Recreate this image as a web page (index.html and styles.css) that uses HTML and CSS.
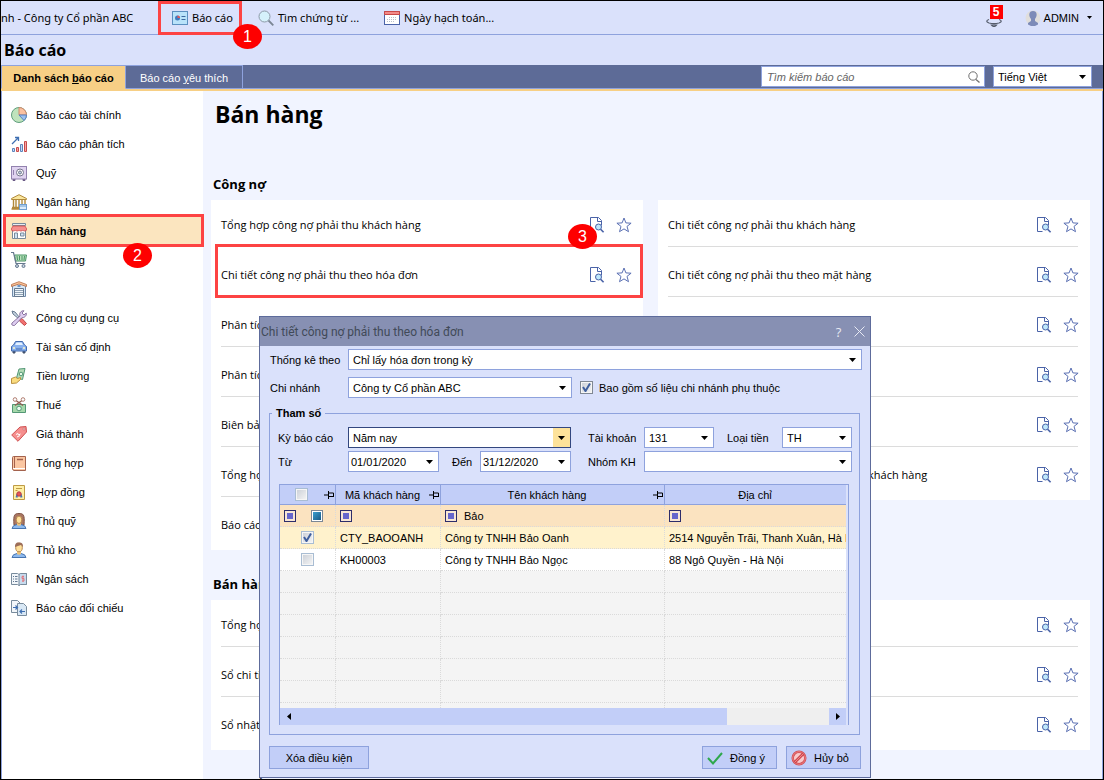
FILE: index.html
```html
<!DOCTYPE html>
<html lang="vi">
<head>
<meta charset="utf-8">
<title>Báo cáo</title>
<link rel="stylesheet" href="styles.css">
</head>
<body>
<svg class="sprite" aria-hidden="true">
  <symbol id="doc" viewBox="0 0 16 16"><path d="M6.500 14.500h-5v-14h8l3 3v5M8.500 .5v4h4" fill="none" stroke="#4a63a8"/><circle cx="9.500" cy="10" r="3" fill="#bfe8fb" stroke="#4a63a8"/><path d="M11.600 12.200l3 3" stroke="#4a63a8" stroke-width="1.600"/></symbol>
  <symbol id="star" viewBox="0 0 16 16"><path d="M8 1l1.900 4.900 5.200.3-4.100 3.200 1.500 5.300L8 11.900l-4.500 2.800L5 9.400.9 6.200l5.200-.3z" fill="#fff" stroke="#5b70b3"/></symbol>
  <symbol id="pin" viewBox="0 0 10 8"><path d="M0 4h4M4.500 0v8M5 2h4.500v4M5 5.500h4.500" fill="none" stroke="#000"/></symbol>
</svg>
<div class="page">
  <header class="topbar">
    <span class="company">nh - Công ty Cổ phần ABC</span>
    <button class="tool tool-marked" type="button">
      <svg class="icon" viewBox="0 0 16 16"><rect x=".5" y="1.500" width="15" height="13" fill="#b9e3fa" stroke="#5b8fc0"/><circle cx="5.500" cy="8" r="2.500" fill="#3f7ac0"/><path d="M5.500 8V5.500A2.500 2.500 0 0 1 8 8z" fill="#e0585a"/><path d="M9.500 6.500h4M9.500 9.500h4" stroke="#3c6aa0"/></svg>
      Báo cáo<span class="step step-one">1</span>
    </button>
    <button class="tool tool-search" type="button">
      <svg class="icon" viewBox="0 0 16 16"><circle cx="6.500" cy="6.500" r="5.500" fill="#d5f1fb" stroke="#8d9aa8"/><path d="M10.500 10.500l4.800 4.800" stroke="#7b8694" stroke-width="1.800"/></svg>
      Tìm chứng từ ...
    </button>
    <button class="tool tool-date" type="button">
      <svg class="icon" viewBox="0 0 16 16"><rect x=".5" y="1.500" width="15" height="13" fill="#fff" stroke="#4a63a8"/><path d="M.5 1.500h15v3H.5z" fill="#f28a88" stroke="#c94848"/><path d="M5 7.500h8M3 9.500h10M3 11.500h8" stroke="#b9bfca" stroke-dasharray="1 1"/></svg>
      Ngày hạch toán...
    </button>
    <button class="bell" type="button" aria-label="Thông báo">
      <svg class="icon" viewBox="0 0 16 16"><path d="M3 8.500c-3 1-3 2.500 0 3.500 3 .8 7 .8 10 0 3-1 3-2.500 0-3.500M5.500 14q2.500 3 5 0z" fill="none" stroke="#555c6b" stroke-width="1.200"/></svg>
      <span class="count">5</span>
    </button>
    <button class="user" type="button">
      <svg class="icon" viewBox="0 0 16 16"><circle cx="8" cy="8" r="7.500" fill="#e0dedc"/><path d="M8 1c4.500 0 4.500 5 2 8v2l3 2v1.500l-3 1.500H6l-3-1.500V13l3-2V9C3.500 6 3.500 1 8 1z" fill="#7d8bb8"/></svg>
      ADMIN
      <svg class="caret" viewBox="0 0 5 3"><path d="M0 0h5L2.500 3z"/></svg>
    </button>
  </header>
  <h1 class="screen-title">Báo cáo</h1>
  <nav class="tabs">
    <button class="tab tab-active" type="button">Danh sách <u>b</u>áo cáo</button>
    <button class="tab" type="button">Báo cáo <u>y</u>êu thích</button>
    <label class="search">
      <input type="search" placeholder="Tìm kiếm báo cáo" aria-label="Tìm kiếm báo cáo">
      <svg viewBox="0 0 12 12"><circle cx="5" cy="5" r="4.200" fill="none" stroke="#707070"/><path d="M8 8.500l3.500 3" stroke="#707070" stroke-width="1.300"/></svg>
    </label>
    <select class="language" aria-label="Ngôn ngữ"><option>Tiếng Việt</option></select>
  </nav>
  <div class="body">
    <nav class="sidebar">
      <a href="#"><svg class="icon" viewBox="0 0 16 16"><circle cx="8" cy="8" r="7.500" fill="#bfe3bd" stroke="#5f9e7c"/><path d="M8 8V.5A7.500 7.500 0 0 1 15.500 8z" fill="#fbc1a0" stroke="#cd8b6c"/><path d="M8 8h7.500a7 7 0 0 1-2.500 5.500z" fill="#9cc0ee" stroke="#5680c2"/></svg>Báo cáo tài chính</a>
      <a href="#"><svg class="icon" viewBox="0 0 16 16"><path d="M1 8l6-6M4 1.500h3.500V5" fill="none" stroke="#3f6fb2" stroke-width="1.300"/><path d="M1.500 12.500h2v3h-2zM9.500 8.500h2v7h-2z" fill="#c3daf5" stroke="#5d84bb"/><path d="M5.500 11.500h2v4h-2zM13.500 5.500h2v10h-2z" fill="#f5a4a3" stroke="#c64a4b"/></svg>Báo cáo phân tích</a>
      <a href="#"><svg class="icon" viewBox="0 0 16 16"><path d="M2 14v1.500h2V14M12 14v1.500h2V14" stroke="#6b5b86" fill="#6b5b86"/><rect x=".5" y="1.500" width="15" height="12.500" fill="#e0d3f0" stroke="#9282ae"/><path d="M2.500 5v5" stroke="#9282ae"/><circle cx="9" cy="7.500" r="3.500" fill="#fff" stroke="#74758c"/><circle cx="9" cy="7.500" r="1.500" fill="#b5ced9" stroke="#74758c"/></svg>Quỹ</a>
      <a href="#"><svg class="icon" viewBox="0 0 16 16"><path d="M.5 5.500v-1L8 .7l7.500 3.800v1z" fill="#fae69c" stroke="#b18a3b"/><path d="M2.500 6v7.500M5 6v7.500M8 6v7.500M11 6v4M14 6v4M.5 15h8M1 13.500h8" stroke="#b18a3b" stroke-width="1.400"/><rect x="8.500" y="10.500" width="7" height="5" fill="#dcecfb" stroke="#6f9fd0"/><path d="M9 12h6" stroke="#6f9fd0"/></svg>Ngân hàng</a>
      <a class="current" href="#"><svg class="icon" viewBox="0 0 16 16"><path d="M1.500 7v8.500h13V7" fill="#fff" stroke="#788b9c"/><path d="M1.500.5h13v2h-13z" fill="#e6edf2" stroke="#788b9c"/><path d="M2 3h12l1.700 3q0 2-2 2-1.700 0-1.900-1-.3 1-1.900 1T8 7q-.3 1-1.900 1T4.200 7q-.3 1-1.900 1-2 0-2-2z" fill="#f68f8e" stroke="#d04a4a" stroke-width=".8"/><path d="M3.500 10h3v5.500h-3zM9.500 10h3.500v3H9.500z" fill="#cfe2f4" stroke="#788b9c"/></svg>Bán hàng<span class="marker"></span><span class="step step-two">2</span></a>
      <a href="#"><svg class="icon" viewBox="0 0 16 16"><path d="M3.500 3h12l-1 6h-10z" fill="#b9e2ba" stroke="#4a9467"/><path d="M6 4l.5 4M8.500 4v4M11 4v4M13.500 4L13 8" stroke="#4a9467"/><path d="M0 .5h2.500L5 11.500h9.500" fill="none" stroke="#66798f" stroke-width="1.200"/><circle cx="6" cy="14" r="1.500" fill="#c6d4e1" stroke="#66798f"/><circle cx="12.500" cy="14" r="1.500" fill="#c6d4e1" stroke="#66798f"/></svg>Mua hàng</a>
      <a href="#"><svg class="icon" viewBox="0 0 16 16"><path d="M1.500 15.500V5L8 2l6.500 3v10.500z" fill="#d7e9f8" stroke="#7089a8"/><path d="M.5 5.500v-2L8 .7l7.500 2.800v2L8 3z" fill="#fcc59b" stroke="#ba7650" stroke-width=".9"/><path d="M3.500 7.500h9v8h-9z" fill="#eff5fa" stroke="#66798f"/><path d="M4 9.500h8M4 11.500h8M4 13.500h8" stroke="#8fa3b6"/><path d="M6.500 5h3" stroke="#4978b5" stroke-width="1.500"/></svg>Kho</a>
      <a href="#"><svg class="icon" viewBox="0 0 16 16"><path d="M1 1l3 1 5 6-1 1-6-5z" fill="#c6d4e1" stroke="#66798f"/><path d="M9 9l2-.5 4.500 5-2 2-5-4.500z" fill="#f17170" stroke="#c24447"/><path d="M1 13L9 6c-1-3 1-5.500 4-5.200L11 3l2 2 2.200-2C16 6 13 8 11 7.500L3.500 15.500C1.500 16 0 14.500 1 13z" fill="#ddcdf0" stroke="#8b75a1"/></svg>Công cụ dụng cụ</a>
      <a href="#"><svg class="icon" viewBox="0 0 16 16"><path d="M2 11v3h2v-2M12 12v2h2v-3" fill="#45536d" stroke="#45536d"/><path d="M2.500 6L4.500 2.500h7L13.500 6l2 1.500V12H.5V7.500z" fill="#8ab2ee" stroke="#426baf"/><path d="M4 6l1.500-2.500h5L12 6z" fill="#e5f2ff"/><path d="M2 9h2M12 9h2" stroke="#fff8c5" stroke-width="1.500"/><path d="M5 10h6" stroke="#426baf"/></svg>Tài sản cố định</a>
      <a href="#"><svg class="icon" viewBox="0 0 16 16"><path d="M8 1l6-.5-2.500 11-6-1.500z" fill="#b5dcb7" stroke="#539775"/><circle cx="10" cy="6" r="1.800" fill="#e9faea" stroke="#539775"/><path d="M.5 10.500l4-1.500 2 1.500 3-1v2l-4 3.500-5 .5z" fill="#fadc7f" stroke="#ba9040"/></svg>Tiền lương</a>
      <a href="#"><svg class="icon" viewBox="0 0 16 16"><path d="M1.500 7.500h13v8h-13z" fill="#a5d8aa" stroke="#539775"/><circle cx="8" cy="11.500" r="2.300" fill="#edfaef" stroke="#539775"/><path d="M5 3.500l7 5M11 3.500l-7 5" stroke="#935d52" stroke-width="1.400"/><circle cx="4" cy="2.500" r="1.800" fill="#fff" stroke="#b07d70"/><circle cx="12" cy="2.500" r="1.800" fill="#fff" stroke="#b07d70"/></svg>Thuế</a>
      <a href="#"><svg class="icon" viewBox="0 0 16 16"><path d="M.7 9L9 1l6-.5.500 5.500L7 15.300z" fill="#f68f8e" stroke="#cf5253"/><circle cx="13" cy="3" r="1" fill="#fff" stroke="#a63e42" stroke-width=".5"/><path d="M5 8.500l2-1 .5 1.500 2-1M6 11l3-1.500" fill="none" stroke="#fff"/></svg>Giá thành</a>
      <a href="#"><svg class="icon" viewBox="0 0 16 16"><path d="M1.500 13V2.500q0-1 1-1h12v14H3q-1.500 0-1.500-2.500z" fill="#fbc6a1" stroke="#a3624d"/><path d="M3.500 1.500v11.500" stroke="#a3624d"/><path d="M2 13.500h12" stroke="#fff"/><path d="M6 4.500h6" stroke="#a3624d" stroke-width="1.500"/></svg>Tổng hợp</a>
      <a href="#"><svg class="icon" viewBox="0 0 16 16"><path d="M2.500 1.500h11v14h-11z" fill="#fff0a6" stroke="#be9b45"/><path d="M5 4.500h6M4.500 6.500h2" stroke="#be9b45"/><path d="M6.500 10l-1 3.500M9.500 10l1 3.500" stroke="#4776b4" stroke-width="2"/><circle cx="8" cy="10" r="2.200" fill="#e75658" stroke="#b93f48"/></svg>Hợp đồng</a>
      <a href="#"><svg class="icon" viewBox="0 0 16 16"><path d="M3 12C2 1 4 .5 8 .5S14 1 13 12z" fill="#a97562" stroke="#805444"/><path d="M1 15.500q.5-3.500 5-4h4q4.500.5 5 4z" fill="#8db9ee" stroke="#4875b0"/><path d="M6 9v3q2 1.500 4 0V9z" fill="#eec379"/><ellipse cx="8" cy="6.800" rx="2.800" ry="3.700" fill="#ffe09b" stroke="#b88a4f"/></svg>Thủ quỹ</a>
      <a href="#"><svg class="icon" viewBox="0 0 16 16"><path d="M1 15.500q.5-3.500 5-4h4q4.500.5 5 4z" fill="#8db9ee" stroke="#4875b0"/><path d="M6 8v4q2 1.500 4 0V8z" fill="#eec379"/><ellipse cx="8" cy="5.500" rx="3.300" ry="4.300" fill="#ffe09b" stroke="#b88a4f"/><path d="M4 5C4 0 7 .5 8 .5c3 0 4 1 4 4.500l-2-2z" fill="#9c6d58"/></svg>Thủ kho</a>
      <a href="#"><svg class="icon" viewBox="0 0 16 16"><path d="M.5 2.500h6L8 3.500l1.500-1h6v11h-6L8 14.500l-1.500-1h-6z" fill="#f2f6fa" stroke="#788b9c"/><path d="M8 3.500l1.500-1h6v11h-6L8 14.500z" fill="#c7dbee" stroke="#788b9c"/><path d="M2 5.500h1M4 5.500h2.500M2 8h1M4 8h2.500M2 10.500h1M4 10.500h2.500" stroke="#637891"/><path d="M13 5.500h-2v2h2v2.500h-2M12 4.500v6.500" fill="none" stroke="#e07980"/></svg>Ngân sách</a>
      <a href="#"><svg class="icon" viewBox="0 0 16 16"><path d="M.5.5h6l3 3v9h-9z" fill="#f2f6fa" stroke="#788b9c"/><path d="M6.500 3.500h6l3 3v9h-9z" fill="#d9e8f5" stroke="#788b9c"/><path d="M2 7.500h4M4.500 5.500l2 2-2 2M9 11.500h5M11 9.500l-2 2 2 2" fill="none" stroke="#3f6fb2" stroke-width="1.200"/></svg>Báo cáo đối chiếu</a>
    </nav>
    <main class="content">
      <h2 class="group-title">Bán hàng</h2>
      <section>
        <h3>Công nợ</h3>
        <div class="columns">
          <ul class="card">
            <li><a href="#">Tổng hợp công nợ phải thu khách hàng</a><svg><use href="#doc"/></svg><svg><use href="#star"/></svg></li>
            <li class="marked"><a href="#">Chi tiết công nợ phải thu theo hóa đơn</a><svg><use href="#doc"/></svg><svg><use href="#star"/></svg><span class="marker"></span><span class="step step-three">3</span></li>
            <li><a href="#">Phân tích</a></li>
            <li><a href="#">Phân tích</a></li>
            <li><a href="#">Biên bản</a></li>
            <li><a href="#">Tổng hợp</a></li>
            <li><a href="#">Báo cáo</a></li>
          </ul>
          <ul class="card">
            <li><a href="#">Chi tiết công nợ phải thu khách hàng</a><svg><use href="#doc"/></svg><svg><use href="#star"/></svg></li>
            <li><a href="#">Chi tiết công nợ phải thu theo mặt hàng</a><svg><use href="#doc"/></svg><svg><use href="#star"/></svg></li>
            <li><svg><use href="#doc"/></svg><svg><use href="#star"/></svg></li>
            <li><svg><use href="#doc"/></svg><svg><use href="#star"/></svg></li>
            <li><svg><use href="#doc"/></svg><svg><use href="#star"/></svg></li>
            <li><a href="#">Tổng hợp công nợ phải thu theo nhóm khách hàng</a><svg><use href="#doc"/></svg><svg><use href="#star"/></svg></li>
          </ul>
        </div>
      </section>
      <section>
        <h3>Bán hàng</h3>
        <div class="columns">
          <ul class="card">
            <li><a href="#">Tổng hợp</a></li>
            <li><a href="#">Sổ chi tiết</a></li>
            <li><a href="#">Sổ nhật ký</a></li>
          </ul>
          <ul class="card">
            <li><svg><use href="#doc"/></svg><svg><use href="#star"/></svg></li>
            <li><svg><use href="#doc"/></svg><svg><use href="#star"/></svg></li>
            <li><svg><use href="#doc"/></svg><svg><use href="#star"/></svg></li>
          </ul>
        </div>
      </section>
      <section>
        <h3>Trao đổi</h3>
      </section>
    </main>
  </div>

  <div class="dialog" role="dialog" aria-labelledby="dialog-title">
    <div class="dialog-bar">
      <h2 id="dialog-title">Chi tiết công nợ phải thu theo hóa đơn</h2>
      <button type="button" aria-label="Trợ giúp">?</button>
      <button type="button" aria-label="Đóng"><svg viewBox="0 0 11 11"><path d="M.5.5l10 10M10.500.5l-10 10" stroke="#e8eaf4" fill="none"/></svg></button>
    </div>
    <form class="dialog-body">
      <div class="line">
        <label class="label" for="stat">Thống kê theo</label>
        <select id="stat" class="grow"><option>Chỉ lấy hóa đơn trong kỳ</option></select>
      </div>
      <div class="line">
        <label class="label" for="branch">Chi nhánh</label>
        <select id="branch" class="w-branch"><option>Công ty Cổ phần ABC</option></select>
        <label class="include"><input type="checkbox" checked>Bao gồm số liệu chi nhánh phụ thuộc</label>
      </div>
      <fieldset>
        <legend>Tham số</legend>
        <div class="params">
          <label for="period">Kỳ báo cáo</label>
          <select id="period" class="focused span-three"><option>Năm nay</option></select>
          <label class="far" for="account">Tài khoản</label>
          <select id="account"><option>131</option></select>
          <label class="mid" for="currency">Loại tiền</label>
          <select id="currency"><option>TH</option></select>
          <label for="from">Từ</label>
          <select id="from" class="date"><option>01/01/2020</option></select>
          <label class="mid" for="to">Đến</label>
          <select id="to" class="date"><option>31/12/2020</option></select>
          <label class="far" for="group">Nhóm KH</label>
          <select id="group" class="span-three"><option></option></select>
        </div>
        <div class="grid">
          <table>
            <colgroup><col class="c-check"><col class="c-code"><col class="c-name"><col></colgroup>
            <thead>
              <tr>
                <th><span class="head"><input class="head-check" type="checkbox" aria-label="Chọn tất cả"><svg><use href="#pin"/></svg></span></th>
                <th><span class="head"><b>Mã khách hàng</b><svg><use href="#pin"/></svg></span></th>
                <th><span class="head"><b>Tên khách hàng</b><svg><use href="#pin"/></svg></span></th>
                <th><span class="head"><b>Địa chỉ</b></span></th>
              </tr>
            </thead>
            <tbody>
              <tr class="filter">
                <td><span class="cell"><i class="op"></i><i class="tri"></i></span></td>
                <td><span class="cell"><i class="op"></i></span></td>
                <td><span class="cell"><i class="op"></i>Bảo</span></td>
                <td><span class="cell"><i class="op"></i></span></td>
              </tr>
              <tr class="selected"><td class="pick"><input type="checkbox" aria-label="CTY_BAOOANH" checked></td><td>CTY_BAOOANH</td><td>Công ty TNHH Bảo Oanh</td><td>2514 Nguyễn Trãi, Thanh Xuân, Hà Nội</td></tr>
              <tr class="plain"><td class="pick"><input type="checkbox" aria-label="KH00003"></td><td>KH00003</td><td>Công ty TNHH Bảo Ngọc</td><td>88 Ngô Quyền - Hà Nội</td></tr>
              <tr><td></td><td></td><td></td><td></td></tr>
              <tr><td></td><td></td><td></td><td></td></tr>
              <tr><td></td><td></td><td></td><td></td></tr>
              <tr><td></td><td></td><td></td><td></td></tr>
              <tr><td></td><td></td><td></td><td></td></tr>
              <tr><td></td><td></td><td></td><td></td></tr>
              <tr class="rest"><td></td><td></td><td></td><td></td></tr>
            </tbody>
          </table>
          <div class="scroll">
            <button type="button" aria-label="Cuộn trái"><svg viewBox="0 0 4 7"><path d="M4 0v7L0 3.500z"/></svg></button>
            <span class="thumb"></span>
            <button type="button" aria-label="Cuộn phải"><svg viewBox="0 0 4 7"><path d="M0 0v7l4-3.500z"/></svg></button>
          </div>
        </div>
      </fieldset>
      <div class="actions">
        <button class="btn btn-clear" type="button">Xóa điều kiện</button>
        <button class="btn" type="button"><svg class="icon" viewBox="0 0 16 16"><path d="M1 8l5 5.500L15 3" fill="none" stroke="#2fa84c" stroke-width="2"/></svg><span>Đồng ý</span></button>
        <button class="btn" type="button"><svg class="icon" viewBox="0 0 16 16"><circle cx="8" cy="8" r="6.300" fill="#f9c9cb" stroke="#cf4a50" stroke-width="2.400"/><circle cx="8" cy="8" r="6.300" fill="none" stroke="#ee8487"/><path d="M3.500 12.500l9-9" stroke="#cf4a50" stroke-width="3"/><path d="M3.500 12.500l9-9" stroke="#ee8487"/></svg><span>Hủy bỏ</span></button>
      </div>
    </form>
  </div>
</div>
</body>
</html>
```
FILE: styles.css
```css
:root {
  --ui: "Liberation Sans", Arial, sans-serif;
  --segoe: "Open Sans", "Noto Sans", sans-serif;
  --line: #8ea2dd;
  --pale: #dae1fb;
  --navy: #5d6b97;
  --mark: #fd4343;
}
* { box-sizing: border-box; }
body { margin: 0; font: 11px/16px var(--ui); color: #000; }
button, input, select { font: inherit; color: inherit; }
button { background: none; border: 0; padding: 0; }
h1, h2, h3, ul { margin: 0; padding: 0; }
a { color: inherit; text-decoration: none; }
.sprite { position: absolute; width: 0; height: 0; }
.icon { width: 16px; height: 16px; flex: none; }
.page {
  position: relative; display: flex; flex-direction: column;
  height: 100vh; overflow: hidden;
  border: 1px solid #000; background: #f1f4ff;
}

.topbar {
  display: flex; align-items: center; height: 34px; flex: none;
  background: var(--pale); border-bottom: 1px solid var(--line);
  font-family: "Noto Sans", "Open Sans", sans-serif;
}
.company { width: 157px; white-space: nowrap; }
.tool { display: flex; align-items: center; gap: 4px; white-space: nowrap; }
.tool-marked {
  position: relative; align-self: stretch; margin-bottom: -1px;
  width: 84px; padding-left: 11px; border: 3px solid var(--mark);
}
.tool-search { margin-left: 16px; }
.tool-date { margin-left: 25px; }
.bell { position: relative; display: flex; margin-left: auto; padding-top: 2px; }
.count {
  position: absolute; left: 4px; top: -4px; width: 13px; height: 14px;
  background: #f00; color: #fff; font: bold 12px/14px var(--ui); text-align: center;
}
.user { display: flex; align-items: center; margin: 0 11px 0 23px; gap: 3px; font-family: var(--ui); }
.caret { width: 5px; height: 3px; margin-left: 5px; }

.step {
  position: absolute; z-index: 3; width: 29px; height: 25px; border-radius: 50%;
  background: #fe0000; color: #fff; text-align: center;
  font: 16px/25px var(--ui);
}
.step-one { left: 72px; top: 20px; }
.step-two { left: 118px; top: 27px; }
.step-three { left: 347px; top: -26px; }

.screen-title {
  height: 30px; flex: none; padding-left: 3px; background: var(--pale);
  font: bold 16px/30px var(--segoe);
}
.tabs {
  display: flex; align-items: flex-start; height: 26px; flex: none;
  background: linear-gradient(var(--navy) 23px, var(--line) 23px, var(--line) 24px, #f7cf85 24px);
}
.tab { width: 117px; height: 24px; padding-top: 1px; color: #fff; border: solid var(--line); border-width: 1px 1px 1px 0; }
.tab-active { width: 125px; background: #f7cf85; color: #000; font-weight: bold; border-bottom-color: #f7cf85; border-left: 1px solid var(--line); }
.search { position: relative; display: flex; width: 224px; margin: 1px 8px 0 auto; }
.search input { width: 100%; height: 21px; padding: 0 5px; border: 1px solid var(--line); outline: 0; background: #fff; font-style: italic; }
.search input::placeholder { color: #666; opacity: 1; }
.search svg { position: absolute; right: 5px; top: 5px; width: 12px; height: 12px; }
select {
  appearance: none; height: 21px; min-width: 0; padding: 0 4px; border: 1px solid var(--line); border-radius: 0;
  background: #fff url("data:image/svg+xml,%3Csvg xmlns='http://www.w3.org/2000/svg' width='7' height='4'%3E%3Cpath d='M0 0h7L3.500 4z'/%3E%3C/svg%3E") no-repeat right 5px center;
}
.language { width: 99px; margin: 1px 11px 0 0; }

.body { display: flex; flex: 1; min-height: 0; border: solid var(--line); border-width: 0 1px; }
.sidebar { width: 201px; flex: none; padding: 9px 0 0; background: #fff; }
.sidebar a { position: relative; display: flex; align-items: center; gap: 9px; height: 29px; margin-left: 3px; padding-left: 6px; }
.sidebar .current { background: #fbe5bf; font-weight: bold; }
.marker { position: absolute; inset: -2px -1px -2px -2px; border: 3px solid var(--mark); pointer-events: none; }
.content { flex: 1; min-width: 0; padding: 0 12px 0 8px; font-family: var(--segoe); }
.group-title { height: 80px; padding: 6px 0 0 4px; font: bold 23px/34px var(--segoe); }
.content h3 { height: 29px; padding-left: 2px; font: bold 13px/26px var(--segoe); }
.columns { display: grid; grid-template-columns: 1fr 1fr; gap: 15px; align-items: start; margin-bottom: 21px; }
.card { background: #fff; padding: 0 12px 0 10px; list-style: none; }
.card li {
  display: flex; align-items: center; justify-content: flex-end; gap: 11px;
  height: 47px; margin-bottom: 3px; padding-top: 4px; border-bottom: 1px solid #dcdcdc; white-space: nowrap;
}
.card li:last-child { border-color: transparent; }
.card li a { margin-right: auto; }
.card svg { width: 16px; height: 16px; margin-bottom: 1px; }
.card svg:last-of-type { margin-right: -1px; }
.card .marked { position: relative; }
.marked .marker { inset: -6px -12px -2px -6px; }

.dialog {
  position: absolute; z-index: 2; left: 258px; top: 315px; width: 612px;
  border: 1px solid #5d6b9b; background: var(--pale);
}
.dialog-bar { display: flex; align-items: center; height: 29px; padding-left: 1px; background: #8790b3; color: #e8eaf4; font-family: var(--segoe); }
.dialog-bar h2 { margin-right: auto; color: #414a58; font: 12px/16px Roboto, sans-serif; }
.dialog-bar button { display: flex; justify-content: center; width: 21px; font-size: 13px; }
.dialog-bar svg { width: 11px; height: 11px; }
.dialog-body { padding: 3px 8px 8px 9px; }
.line { display: flex; align-items: center; margin-bottom: 7px; }
.label { width: 79px; padding-left: 1px; }
.grow { flex: 1; }
.w-branch { width: 224px; }
.include { display: flex; align-items: center; gap: 6px; margin-left: 8px; }
input[type="checkbox"] {
  appearance: none; width: 13px; height: 13px; margin: 0; flex: none;
  border: 1px solid #808894; box-shadow: inset 0 0 0 1px #f6f6f6;
  background: linear-gradient(135deg, #c9ced6, #f6f6f6);
}
input[type="checkbox"]:checked {
  background: url("data:image/svg+xml,%3Csvg xmlns='http://www.w3.org/2000/svg' width='11' height='11'%3E%3Cpath d='M2 5l2.500 4L9 1.500' fill='none' stroke='%233f5f9e' stroke-width='2'/%3E%3C/svg%3E") center no-repeat, linear-gradient(135deg, #c9ced6, #f6f6f6);
}
fieldset { margin: 0 2px 11px 0; padding: 6px 10px 9px 8px; border: 1px solid var(--line); min-width: 0; }
legend { margin-left: -6px; padding: 0 4px; font-weight: bold; }
.params {
  display: grid; grid-template-columns: 70px 91px 41px 91px 73px 70px 68px 70px;
  row-gap: 3px; align-items: center; margin-bottom: 12px;
}
.mid { padding-left: 13px; }
.far { padding-left: 17px; }
.span-three { grid-column: span 3; }
.date { padding-left: 2px; }
.focused {
  border-color: #33477f;
  background: url("data:image/svg+xml,%3Csvg xmlns='http://www.w3.org/2000/svg' width='17' height='19'%3E%3Cpath fill='%23fde29a' d='M0 0h17v19H0z'/%3E%3Cpath d='M5 8h7l-3.500 4z'/%3E%3C/svg%3E") right center no-repeat #fff;
}

.grid { border: 1px solid var(--line); border-bottom: 0; padding-right: 2px; margin-left: 1px; }
table { width: 100%; table-layout: fixed; border-collapse: separate; border-spacing: 0; }
.c-check { width: 56px; }
.c-code { width: 105px; }
.c-name { width: 224px; }
th { height: 20px; padding: 0; background: #c2cef8; border: solid var(--line); border-width: 0 1px 1px 0; font-weight: normal; }
th:last-child { border-right: 0; }
th b { flex: 1; font-weight: normal; text-align: center; white-space: nowrap; }
.head { display: flex; align-items: center; justify-content: space-between; padding-right: 1px; }
.head svg { width: 10px; height: 8px; }
th .head-check { margin-left: 15px; }
table input[type="checkbox"] { border-color: #a9bdd3; }
td {
  height: 22px; padding: 0 4px; overflow: hidden; white-space: nowrap;
  background: #f4f4f4; border: dotted #dadada; border-width: 0 1px 1px 0;
}
td:last-child { border-right: 0; }
.plain td { background: #fff; }
.selected td { background: #fff2cc; }
.filter td { background: #fbe3c0; }
.rest td { height: 5px; border-bottom: 0; }
.pick input { display: block; margin: 0 auto; }
.cell { display: flex; align-items: center; gap: 7px; }
.op { width: 12px; height: 12px; border: 1px solid #2d2d6b; background: #6666cc; box-shadow: inset 0 0 0 2px #f7e6d5; }
.tri { width: 12px; height: 12px; margin-left: 8px; border: 1px solid #7b8796; background: linear-gradient(135deg, #3fa7d8, #14507c); box-shadow: inset 0 0 0 1px #fff; }
.scroll { display: flex; height: 17px; background: #efefef; }
.scroll button { display: flex; align-items: center; justify-content: center; width: 17px; background: #c2cef8; }
.scroll button:last-child { margin-left: auto; }
.scroll svg { width: 4px; height: 7px; }
.thumb { width: 76%; background: #c2cef8; }

.actions { display: flex; gap: 9px; padding-right: 1px; }
.btn { display: flex; align-items: center; width: 75px; height: 23px; padding: 0 4px; background: #c2cef8; border: 1px solid var(--line); }
.btn span { flex: 1; text-align: center; }
.btn-clear { width: 100px; justify-content: center; margin-right: auto; }
```
